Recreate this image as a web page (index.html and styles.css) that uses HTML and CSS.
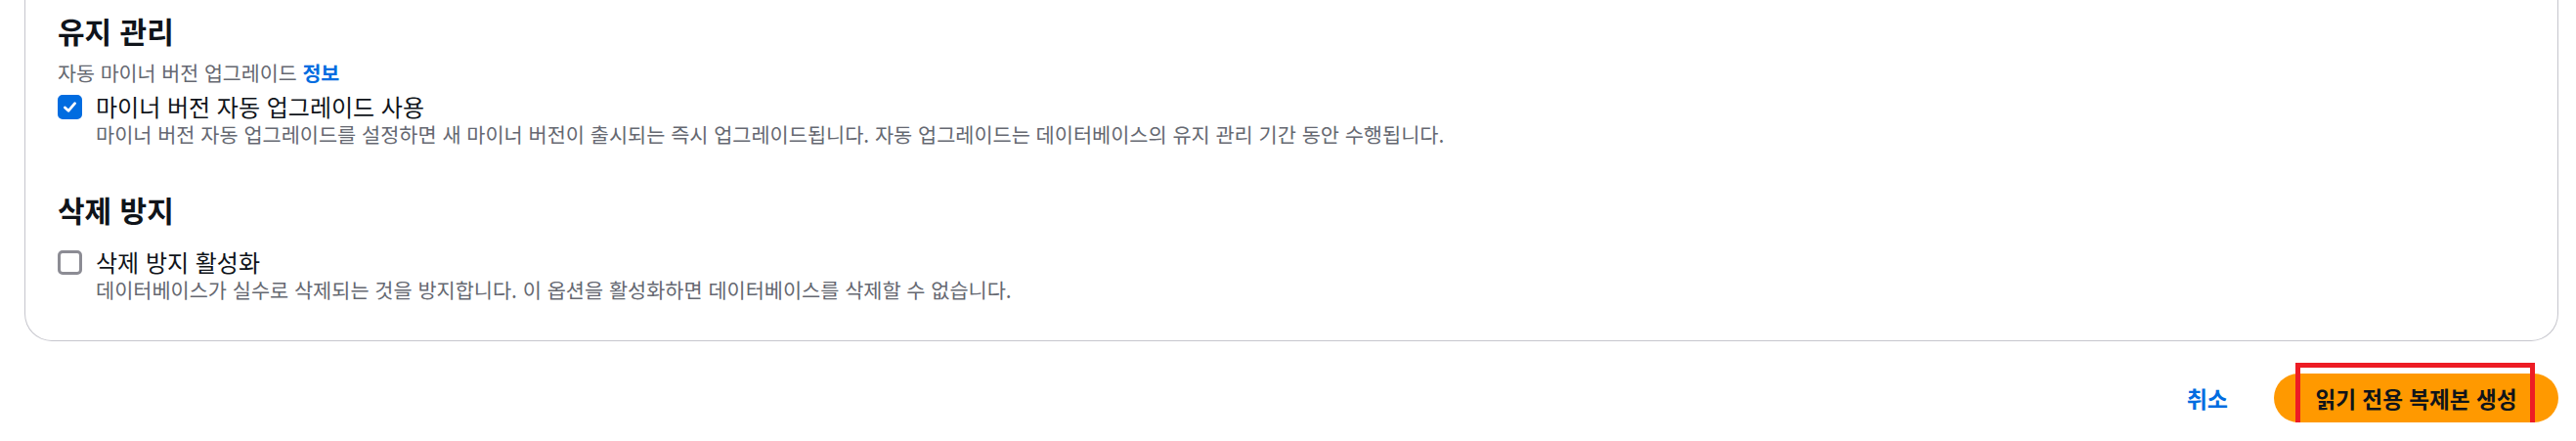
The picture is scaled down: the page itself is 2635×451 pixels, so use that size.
FILE: index.html
```html
<!DOCTYPE html>
<html lang="ko">
<head>
    <meta charset="UTF-8">
    <meta name="viewport" content="width=device-width, initial-scale=1.0">
    <title>읽기 전용 복제본 생성</title>
    <link rel="stylesheet" href="styles.css">
</head>
<body>

<div class="card">
    <section class="section">
        <h2 class="section-title">유지 관리</h2>
        <div class="field-label">자동 마이너 버전 업그레이드 <a class="info">정보</a></div>
        <label class="check-row">
            <span class="box checked">
                <svg viewBox="0 0 16 16" width="17" height="17"><path d="M3.2 8.4 L6.6 11.6 L12.8 4.4" fill="none" stroke="#fff" stroke-width="2.6" stroke-linecap="round" stroke-linejoin="round"/></svg>
            </span>
            <span class="check-text">
                <span class="check-label">마이너 버전 자동 업그레이드 사용</span>
                <span class="check-desc">마이너 버전 자동 업그레이드를 설정하면 새 마이너 버전이 출시되는 즉시 업그레이드됩니다. 자동 업그레이드는 데이터베이스의 유지 관리 기간 동안 수행됩니다.</span>
            </span>
        </label>
    </section>

    <section class="section second">
        <h2 class="section-title">삭제 방지</h2>
        <label class="check-row">
            <span class="box"></span>
            <span class="check-text">
                <span class="check-label">삭제 방지 활성화</span>
                <span class="check-desc">데이터베이스가 실수로 삭제되는 것을 방지합니다. 이 옵션을 활성화하면 데이터베이스를 삭제할 수 없습니다.</span>
            </span>
        </label>
    </section>
</div>

<div class="actions">
    <a class="cancel">취소</a>
    <div class="primary-wrap">
        <button class="primary">읽기 전용 복제본 생성</button>
        <div class="highlight"></div>
    </div>
</div>

</body>
</html>
```

FILE: styles.css
```css
body {
    font-family: "Noto Sans CJK KR", "Open Sans", sans-serif;
    margin: 0;
    padding: 0 18px 0 25px;
    background: #fff;
    color: #0f141a;
}

.card {
    border: 1px solid #c6c6cd;
    border-top: none;
    border-radius: 0 0 28px 28px;
    padding: 11px 33px 39px 33px;
}

.section-title {
    font-size: 30px;
    line-height: 40px;
    font-weight: 700;
    margin: 0;
}

.second {
    margin-top: 44px;
}

.field-label {
    font-size: 20.6px;
    line-height: 28px;
    color: #656871;
    margin-top: 9px;
}

.info {
    color: #006ce0;
    font-weight: 700;
}

.check-row {
    display: flex;
    gap: 14px;
    margin-top: 6px;
}

.second .check-row {
    margin-top: 19px;
}

.box {
    flex: none;
    width: 25px;
    height: 25px;
    box-sizing: border-box;
    border: 3px solid #8c8c94;
    border-radius: 5px;
    margin-top: 3px;
    display: flex;
    align-items: center;
    justify-content: center;
}

.box.checked {
    background: #006ce0;
    border-color: #006ce0;
}

.check-text {
    display: flex;
    flex-direction: column;
}

.check-label {
    font-size: 24px;
    line-height: 30px;
}

.check-desc {
    font-size: 20.8px;
    line-height: 26px;
    color: #656871;
}

.actions {
    display: flex;
    justify-content: flex-end;
    align-items: center;
    gap: 47px;
    margin-top: 33px;
}

.cancel {
    color: #006ce0;
    font-weight: 700;
    font-size: 23px;
}

.primary-wrap {
    position: relative;
}

.primary {
    font-family: inherit;
    background: #ff9900;
    color: #0f141a;
    border: none;
    border-radius: 25px;
    height: 50px;
    width: 291px;
    font-size: 22.6px;
    font-weight: 700;
    display: block;
}

/* annotation box over the button */
.highlight {
    position: absolute;
    left: 22px;
    top: -11px;
    width: 245px;
    height: 72px;
    box-sizing: border-box;
    border: 5px solid #ed1c24;
}
```
